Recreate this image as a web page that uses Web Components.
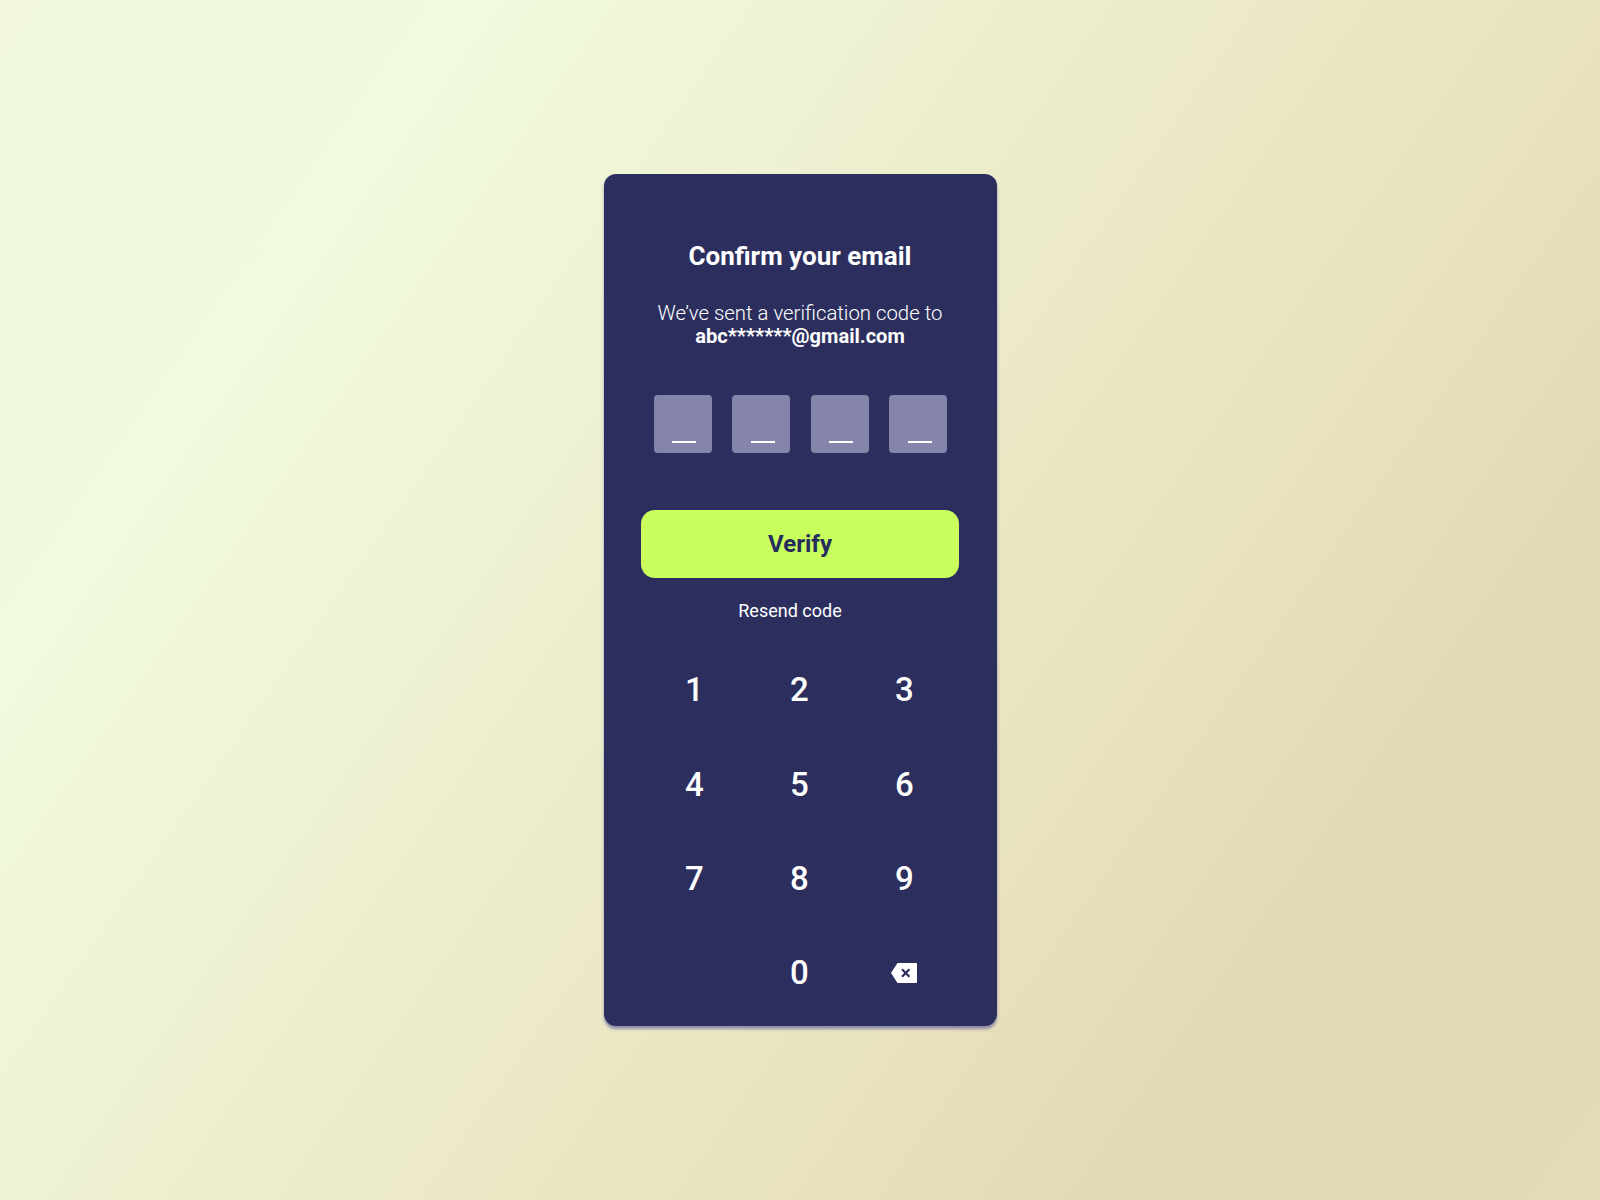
<!DOCTYPE html>
<html lang="en"><head><meta charset="utf-8"><title>Confirm your email</title>
<style>
html,body{margin:0;height:100%}
body{width:1600px;height:1200px;overflow:hidden;display:flex;align-items:center;justify-content:center;background:linear-gradient(125deg,#f0f7dd 0%,#f1fadd 20%,#ecebca 48%,#e8e2be 66%,#e3d9b4 80%,#e3dab6 100%);font-family:Roboto,sans-serif}
</style></head><body>
<confirm-card>
  <span slot="title">Confirm your email</span>
  <span slot="line">We’ve sent a verification code to</span>
  <span slot="email">abc*******@gmail.com</span>
  <code-box></code-box><code-box></code-box><code-box></code-box><code-box></code-box>
  <span slot="action">Verify</span>
  <span slot="resend">Resend code</span>
  <key-pad slot="pad"></key-pad>
</confirm-card>
<script>
function def(name,html){customElements.define(name,class extends HTMLElement{constructor(){super();this.attachShadow({mode:'open'}).innerHTML=html}})}
def('confirm-card',`<style>
:host{display:block;box-sizing:border-box;width:393px;height:852px;border-radius:12px;background:#2c2f5e;color:#fff;box-shadow:0 3px 3px rgba(85,80,155,.6);font-family:Roboto,sans-serif;padding-top:67px;text-align:center}
h1{margin:0;font-size:26px;line-height:30px;font-weight:700}
p{margin:31px 0 0;font-size:20.35px;line-height:23px;font-weight:300}
b{font-weight:700;display:block;font-size:20.1px}
.codes{display:flex;justify-content:center;gap:20.4px;margin-top:47px;padding-left:1px}
button{all:unset;display:block;box-sizing:border-box;width:318.5px;height:68px;margin:57px auto 0;border-radius:14px;background:#c9ff5d;color:#262c5e;font-size:24px;font-weight:700;line-height:68px;text-align:center}
.resend{font-size:18px;line-height:22px;margin-top:21.5px;padding-right:20px}
</style>
<h1><slot name="title"></slot></h1>
<p><slot name="line"></slot><b><slot name="email"></slot></b></p>
<div class="codes"><slot></slot></div>
<button><slot name="action"></slot></button>
<div class="resend"><slot name="resend"></slot></div>
<slot name="pad"></slot>`);
def('code-box',`<style>
:host{display:flex;box-sizing:border-box;width:58px;height:58px;border-radius:4px;background:#8585ac;justify-content:center;align-items:flex-end;padding:0 0 10px 3px}
i{display:block;width:24px;height:2px;background:#fff}
</style><i></i>`);
def('pad-key',`<style>
:host{display:flex;align-items:center;justify-content:center;height:94.4px;font-size:33px;font-weight:500;color:#fff}
</style><slot></slot>`);
def('key-pad',`<style>
:host{display:grid;grid-template-columns:repeat(3,105px);justify-content:center;margin-top:21px;padding-right:1px}
svg{display:block;width:26px;height:20px;margin-right:2px}
</style>
<pad-key>1</pad-key><pad-key>2</pad-key><pad-key>3</pad-key>
<pad-key>4</pad-key><pad-key>5</pad-key><pad-key>6</pad-key>
<pad-key>7</pad-key><pad-key>8</pad-key><pad-key>9</pad-key>
<pad-key></pad-key><pad-key>0</pad-key>
<pad-key><svg viewBox="0 0 26 20"><path d="M6.5 0H25.2a.8.8 0 0 1 .8.8V19.2a.8.8 0 0 1-.8.8H6.5L0 10Z" fill="#fff"/><path d="M11 6.2l7.4 7.6M18.4 6.2L11 13.8" stroke="#2c2f5e" stroke-width="2.2" fill="none"/></svg></pad-key>`);
</script>
</body></html>
